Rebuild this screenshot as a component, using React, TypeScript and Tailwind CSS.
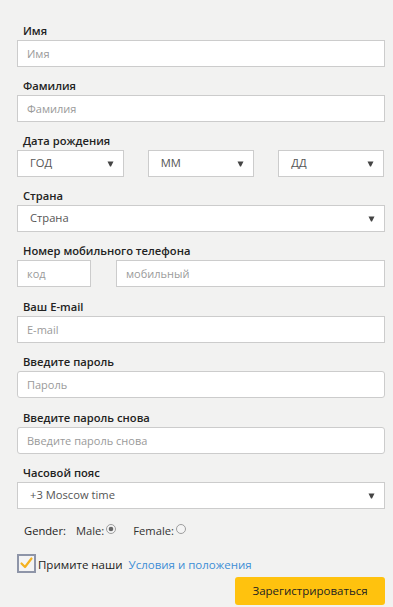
import React from "react";

const font = { fontFamily: '"Open Sans", "Noto Sans", sans-serif' };

function Label({ children }: { children: React.ReactNode }) {
  return (
    <div className="h-4 mb-px pl-[6px] text-[11.2px] leading-4 font-semibold text-[#222]">
      {children}
    </div>
  );
}

function TextInput({ placeholder, rounded, className = "" }: { placeholder: string; rounded?: boolean; className?: string }) {
  return (
    <input
      placeholder={placeholder}
      className={`h-[27px] border border-[#cccccc] bg-white pl-[9px] text-[11px] text-[#333] placeholder:text-[#9a9a9a] outline-none ${rounded ? "rounded-[3px]" : ""} ${className}`}
      style={font}
    />
  );
}

function Arrow() {
  return (
    <svg width="7" height="6" viewBox="0 0 7 6" className="shrink-0">
      <path d="M0.5 0.5 H6.5 L4 5.5 H3 Z" fill="#444" />
    </svg>
  );
}

function Select({ value, className = "" }: { value: string; className?: string }) {
  return (
    <div className={`h-[27px] border border-[#cccccc] bg-white flex items-center justify-between pl-[12px] pr-[9px] ${className}`}>
      <span className="text-[11.2px] text-[#555]">{value}</span>
      <Arrow />
    </div>
  );
}

function Field({ label, children, mb = "mb-[11px]" }: { label: string; children: React.ReactNode; mb?: string }) {
  return (
    <div className={`flex flex-col ${mb}`}>
      <Label>{label}</Label>
      {children}
    </div>
  );
}

function Radio({ checked }: { checked?: boolean }) {
  return (
    <svg width="10" height="10" viewBox="0 0 10 10" className="ml-[2px] -mt-[5px]">
      <circle cx="5" cy="5" r="4.5" fill="#f4f4f4" stroke="#9d9d9d" strokeWidth="1" />
      {checked && <circle cx="5" cy="5" r="2.3" fill="#666" />}
    </svg>
  );
}

export default function App() {
  return (
    <div className="w-[393px] h-[607px] bg-[#f2f2f1] overflow-hidden" style={font}>
      <div className="pl-[17px] pr-[8px] pt-[23px] flex flex-col">
        <Field label="Имя">
          <TextInput placeholder="Имя" />
        </Field>
        <Field label="Фамилия">
          <TextInput placeholder="Фамилия" />
        </Field>
        <Field label="Дата рождения">
          <div className="grid grid-cols-3 gap-[24px]">
            <Select value="ГОД" />
            <Select value="ММ" />
            <Select value="ДД" className="mr-px" />
          </div>
        </Field>
        <Field label="Страна">
          <Select value="Страна" />
        </Field>
        <Field label="Номер мобильного телефона" mb="mb-[12px]">
          <div className="flex gap-[25px]">
            <TextInput placeholder="код" className="w-[74px]" />
            <TextInput placeholder="мобильный" className="flex-1 min-w-0" />
          </div>
        </Field>
        <Field label="Ваш E-mail">
          <TextInput placeholder="E-mail" />
        </Field>
        <Field label="Введите пароль" mb="mb-[12px]">
          <TextInput placeholder="Пароль" rounded />
        </Field>
        <Field label="Введите пароль снова">
          <TextInput placeholder="Введите пароль снова" rounded />
        </Field>
        <Field label="Часовой пояс" mb="mb-0">
          <Select value="+3 Moscow time" />
        </Field>

        <div className="mt-[14px] h-4 pl-[7px] flex items-center text-[11.2px] leading-4 text-[#222]">
          <span>Gender:</span>
          <span className="ml-[10px] text-[#333]">Male:</span>
          <Radio checked />
          <span className="ml-[17px] text-[#333]">Female:</span>
          <Radio />
        </div>

        <div className="mt-[15px] h-[19px] flex items-end">
          <svg width="19" height="19" viewBox="0 0 19 19" className="shrink-0">
            <rect x="1" y="1" width="17" height="17" fill="#f4f4f4" stroke="#8e95a8" strokeWidth="2" />
            <path d="M4.5 9.5 L8 13 L14.5 4.5" fill="none" stroke="#f4b221" strokeWidth="2.2" strokeLinecap="round" strokeLinejoin="round" />
          </svg>
          <span className="ml-[2px] text-[11.5px] leading-4 text-[#222]">Примите наши</span>
          <span className="ml-[6px] text-[11.5px] leading-4 text-[#3d8ed6]">Условия и положения</span>
        </div>

        <div className="mt-[4px] flex justify-end">
          <button className="w-[150px] h-[28px] rounded-[3px] bg-[#ffc20e] text-[11.5px] text-[#222]" style={font}>
            Зарегистрироваться
          </button>
        </div>
      </div>
    </div>
  );
}
